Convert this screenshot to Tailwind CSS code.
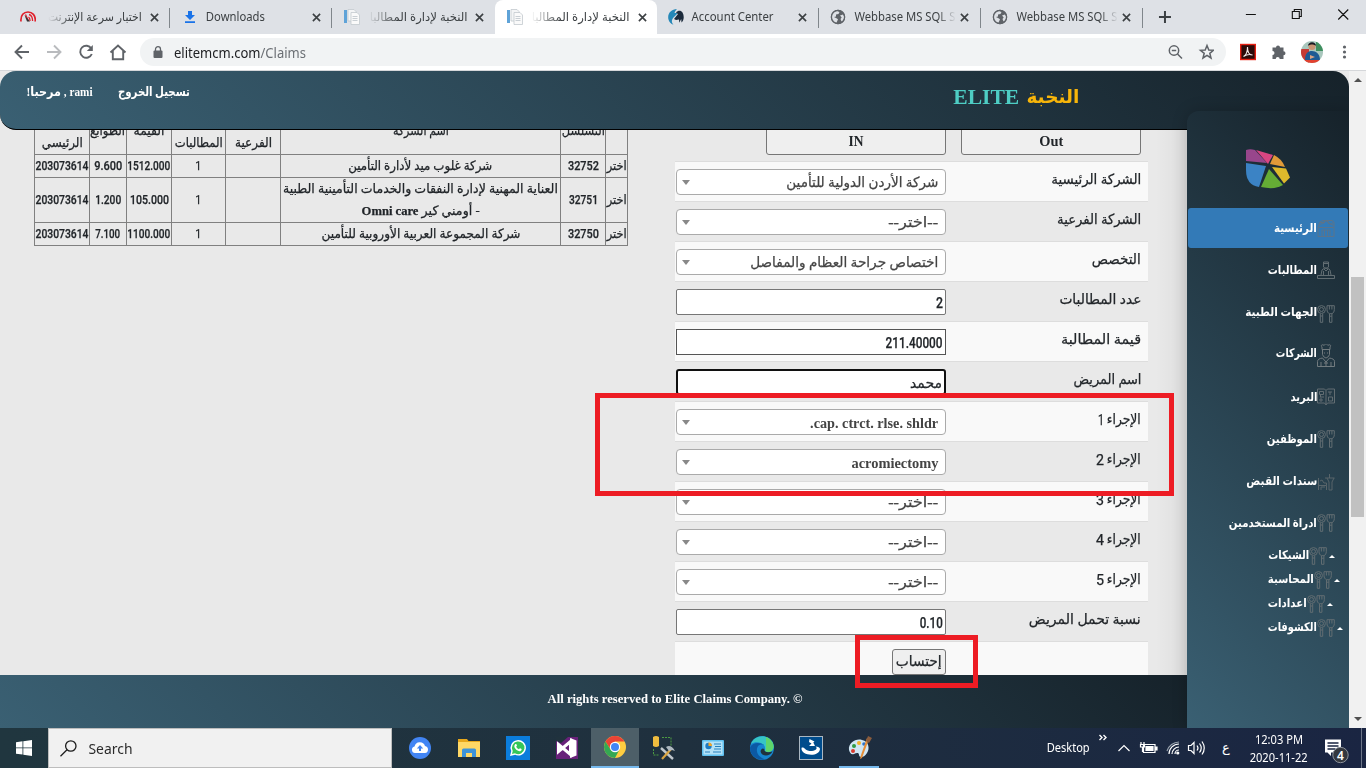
<!DOCTYPE html>
<html lang="ar">
<head>
<meta charset="utf-8">
<title>النخبة لإدارة المطالبات</title>
<script src="https://cdn.jsdelivr.net/npm/@tailwindcss/browser@4"></script>
</head>
<body class="w-[1366px] h-[768px] overflow-hidden bg-[#e9e9e9] flex flex-col relative font-['Liberation_Serif','DejaVu_Sans',serif] text-[#212529]">

<svg class="hidden">
  <symbol id="x" viewBox="0 0 10 10"><path d="M1 1l8 8M9 1l-8 8" stroke="#3c4043" stroke-width="1.8" fill="none"/></symbol>
  <symbol id="doc" viewBox="0 0 16 16"><path d="M0 1h3v13H0z" fill="#5fa3d8"/><path d="M4 .5h6l2 2V12H4z" fill="#f4f5f6" stroke="#c3c9ce" stroke-width=".8"/><path d="M7 3.500h6l2.500 2.500V15.500H7z" fill="#fafafa" stroke="#c3c9ce" stroke-width=".8"/><path d="M8.500 7.500h5M8.500 9.500h5M8.500 11.500h5" stroke="#bcc4ca" stroke-width=".8"/></symbol>
  <symbol id="globe" viewBox="0 0 16 16"><circle cx="8" cy="8" r="7.200" fill="#5f6368"/><path d="M1.500 8.500C1.500 5 4 2.500 7 2l2.500 1-1 2-2.500.5v2l-2 .5 2.500 1.200 1.500 1-1.500 3.600C3.500 13.500 1.500 11 1.500 8.500zM10 6.500l3-1 1.500 2.500-1 3.500-2 1-1-2.500 1.200-1.500z" fill="#dee1e6"/><circle cx="8" cy="8" r="6.600" fill="none" stroke="#5f6368" stroke-width="1.300"/></symbol>
  <symbol id="fork" viewBox="0 0 18 18"><g fill="none" stroke="#626d72" stroke-width="1"><circle cx="4.500" cy="4.500" r="3.900"/><circle cx="4.500" cy="4.500" r="2"/><path d="M3.300 8.500v8.800h2.400V8.500M3.300 11h2.400M10 .7h7.300v4c0 2-1 3.300-2.300 4h-2.600C11 8 10 6.700 10 4.700zM12.400.7v3.800M14.900.7v3.800M12.500 8.700v8.600h2.400V8.700M12.500 11.200h2.400"/></g></symbol>
</svg>

<!-- Tab strip -->
<div class="h-[34px] shrink-0 bg-[#dee1e6] flex pl-2 font-['Noto_Sans','DejaVu_Sans',sans-serif] text-[12px] text-[#3c4043] whitespace-nowrap">
  <div class="w-[162.400px] flex items-center relative">
    <svg class="w-4 h-4 ml-3 shrink-0" viewBox="0 0 16 16" fill="none"><path d="M1 12.500C.3 6 4 3 8 3s8 3 7.200 9.500" stroke="#e0202c" stroke-width="1.700"/><path d="M8.500 12L5.500 5.500M9 5.500c2 .5 3.500 3 3.600 6.500M8.500 8c1 .5 1.500 2 1.600 4" stroke="#e0202c" stroke-width="1.300"/><path d="M7 12.500L4.500 6 10 12.500z" fill="#333"/></svg>
    <div class="w-[94px] ml-3 text-right [mask-image:linear-gradient(to_left,black_75%,transparent)]" dir="rtl"><span data-w="94">اختبار سرعة الإنترنت</span></div>
    <svg class="w-[9px] h-[9px] ml-2"><use href="#x"/></svg>
    <i class="absolute right-0 top-2 h-5 w-px bg-[#80868b]"></i>
  </div>
  <div class="w-[162.400px] flex items-center relative">
    <svg class="w-3 h-3 ml-3.5 shrink-0" viewBox="0 0 12 12" fill="#1a73e8"><path d="M4 0h4v4h3L6 9 1 4h3zM1 10.200h10V12H1z"/></svg>
    <div class="w-[104px] ml-2.5"><span data-w="59">Downloads</span></div>
    <svg class="w-[9px] h-[9px] ml-0.5"><use href="#x"/></svg>
    <i class="absolute right-0 top-2 h-5 w-px bg-[#80868b]"></i>
  </div>
  <div class="w-[162.400px] flex items-center">
    <svg class="w-4 h-4 ml-3 shrink-0"><use href="#doc"/></svg>
    <div class="w-[99px] ml-2 text-right [mask-image:linear-gradient(to_left,black_70%,transparent)]" dir="rtl"><span data-w="98">النخبة لإدارة المطالبا</span></div>
    <svg class="w-[9px] h-[9px] ml-2"><use href="#x"/></svg>
  </div>
  <div class="w-[162.400px] flex items-center bg-white rounded-t-lg">
    <svg class="w-4 h-4 ml-3 shrink-0"><use href="#doc"/></svg>
    <div class="w-[99px] ml-2 text-right [mask-image:linear-gradient(to_left,black_70%,transparent)]" dir="rtl"><span data-w="98">النخبة لإدارة المطالبا</span></div>
    <svg class="w-[9px] h-[9px] ml-2"><use href="#x"/></svg>
  </div>
  <div class="w-[162.400px] flex items-center relative">
    <svg class="w-4 h-4 ml-[11px] shrink-0" viewBox="0 0 16 16"><path d="M9 0C3 0-1 5 .5 10.500 1 13 3 15 5.500 15.800 3.500 13.500 3 11 6 8l4-4H6.500C7 2 8 1 9 0z" fill="#2588b8"/><path d="M8 3.500C10 1 13 1 14.500 3.500c2 3.500 1.500 8-1 10l-.3-3.500-2 3.800-.2-3.300L8 11l-2-1 4-5z" fill="#1c2b3c"/></svg>
    <div class="w-[100px] ml-2"><span data-w="82">Account Center</span></div>
    <svg class="w-[9px] h-[9px] ml-[6px]"><use href="#x"/></svg>
    <i class="absolute right-0 top-2 h-5 w-px bg-[#80868b]"></i>
  </div>
  <div class="w-[162.400px] flex items-center relative">
    <svg class="w-4 h-4 ml-[11px] shrink-0"><use href="#globe"/></svg>
    <div class="w-[102px] ml-2 [mask-image:linear-gradient(to_right,black_82%,transparent)]"><span data-w="101">Webbase MS SQL S</span></div>
    <svg class="w-[9px] h-[9px] ml-[4px]"><use href="#x"/></svg>
    <i class="absolute right-0 top-2 h-5 w-px bg-[#80868b]"></i>
  </div>
  <div class="w-[162.400px] flex items-center relative">
    <svg class="w-4 h-4 ml-[11px] shrink-0"><use href="#globe"/></svg>
    <div class="w-[102px] ml-2 [mask-image:linear-gradient(to_right,black_82%,transparent)]"><span data-w="101">Webbase MS SQL S</span></div>
    <svg class="w-[9px] h-[9px] ml-[4px]"><use href="#x"/></svg>
    <i class="absolute right-0 top-2 h-5 w-px bg-[#80868b]"></i>
  </div>
  <svg class="w-[223px] h-[34px]" viewBox="0 0 223 34" fill="none"><path d="M16 17h12M22 11v12" stroke="#3c4043" stroke-width="2"/><path d="M103 14.500h10M149.500 11.500h7v7h-7zM151.500 11v-1.500h7v7h-1.500M195.500 9.500l10 10M205.500 9.500l-10 10" stroke="#111" stroke-width="1.100"/></svg>
</div>

<!-- Toolbar -->
<div class="h-[37px] shrink-0 bg-white border-b border-[#d5d7da] flex items-center font-['Noto_Sans',sans-serif]">
  <svg class="w-[140px] h-9 shrink-0" viewBox="0 0 140 36" fill="none" stroke-width="1.900"><path d="M29 18H16M22 11.500L15.500 18l6.500 6.500" stroke="#5f6368"/><path d="M47 18h13M54 11.500l6.500 6.500-6.500 6.500" stroke="#b9bbbe"/><path d="M91.300 14.500a6 6 0 1 0 .5 5.500" stroke="#5f6368"/><path d="M92.800 11v6h-6z" fill="#5f6368"/><path d="M110.500 18.500l7.500-7 7.500 7M112.800 17v8.200h10.400V17" stroke="#5f6368"/></svg>
  <div class="h-7 w-[1086px] rounded-full bg-[#f1f3f4] flex items-center">
    <svg class="w-[10px] h-3 ml-[13px]" viewBox="0 0 10 12"><rect x="0.500" y="4.500" width="9" height="7.500" rx="1" fill="#5f6368"/><path d="M2.500 5V3.200a2.500 2.500 0 0 1 5 0V5" fill="none" stroke="#5f6368" stroke-width="1.300"/></svg>
    <div class="ml-[11px] text-[14px] text-[#202124] w-[980px]"><span data-w="132">elitemcm.com<span class="text-[#6b6f74]">/Claims</span></span></div>
    <svg class="w-[60px] h-7" viewBox="0 0 60 28" fill="none" stroke="#5f6368" stroke-width="1.500"><circle cx="20" cy="12.500" r="4.700"/><path d="M23.500 16l4.500 4.500M17.800 12.500h4.400"/><path d="M53 7.500l1.800 4.500 4.700.300-3.700 3 1.200 4.700-4-2.600-4 2.600 1.200-4.700-3.700-3 4.700-.300z"/></svg>
  </div>
  <svg class="w-[140px] h-9" viewBox="0 0 140 36"><rect x="14.700" y="10.500" width="14.600" height="15" fill="#2b0b0a" stroke="#e51f12" stroke-width="1.400"/><path d="M17.500 22.500c2-1 4-4.500 4-9.500 0 5 2 8 5 8-3-1-6-.5-9 1.500z" fill="none" stroke="#f3e9e8" stroke-width="1.100"/><path d="M46.500 13.500h3.500a2 2 0 1 1 4 0h3.500v3.700a2 2 0 1 1 0 4v3.800h-3.800a2 2 0 0 0-4 0h-3.200v-4a2 2 0 1 0 0-4z" fill="#5f6368"/><clipPath id="av"><circle cx="86" cy="18" r="11"/></clipPath><g clip-path="url(#av)"><path d="M75 7h22v22H75z" fill="#a9c7bd"/><path d="M90 8h7v9h-7z" fill="#3f8f5f"/><path d="M75 15h8v14h-8z" fill="#c53a35"/><path d="M79 26c0-7 3-9 7-9s8 3 8 9z" fill="#1e5a94"/><circle cx="86" cy="12.500" r="3.500" fill="#c99473"/><path d="M82 12c0-5 8-5 8 0-2-2-6-2-8 0z" fill="#1a1a22"/><path d="M78 26h18v4H78z" fill="#e2412f"/><path d="M84 21l5 2-5 2z" fill="#d9a283"/></g><g fill="#5f6368"><circle cx="118.500" cy="13" r="1.600"/><circle cx="118.500" cy="18" r="1.600"/><circle cx="118.500" cy="23" r="1.600"/></g></svg>
</div>

<!-- Page viewport -->
<div class="h-[657px] shrink-0 flex relative">
  <div class="w-[1349px] flex flex-col relative overflow-hidden" dir="ltr">
    <header class="h-[59px] shrink-0 relative z-10 rounded-2xl border-b border-black bg-[linear-gradient(45deg,#3a6073,#16222a)] flex font-bold text-white text-[13px]">
      <div class="pl-[26px] pt-3 w-[92px] box-content leading-[18px]"><span data-w="66" dir="rtl"><bdi>rami</bdi> , مرحبا!</span></div>
      <div class="pt-3 leading-[18px]"><span data-w="72" dir="rtl">تسجيل الخروج</span></div>
      <div class="ml-[763px] pt-[11px] text-[22px] leading-[30px] flex gap-[7px]"><span data-w="66" class="text-[#4ecdc4]">ELITE</span><span data-w="53" class="text-[#f7b50a] text-[19px]">النخبة</span></div>
    </header>

    <main class="h-[545px] shrink-0 flex overflow-hidden w-[1187px]">
      <!-- Claims table -->
      <div class="ml-[34px] w-[594px] -mt-[21px] [-webkit-text-stroke:0.250px]" dir="rtl">
        <table class="table-fixed w-[593px] border-collapse text-center text-[13px] leading-[18px] [&_td]:border [&_td]:border-[#808080] [&_td]:p-0">
          <colgroup><col class="w-[22px]"><col class="w-[45px]"><col class="w-[280px]"><col class="w-[55px]"><col class="w-[54px]"><col class="w-[45px]"><col class="w-[37px]"><col class="w-[55px]"></colgroup>
          <tr class="h-[45px]"><td></td><td class="align-top pt-3!"><span data-w="43">التسلسل</span></td><td class="align-top pt-3!"><span data-w="56">اسم الشركة</span></td><td class="align-bottom pb-0.5!"><span data-w="37">الفرعية</span></td><td class="align-bottom pb-0.5!"><span data-w="48">المطالبات</span></td><td class="align-top pt-3!"><span data-w="31">القيمة</span></td><td class="align-top pt-3!"><span data-w="35">الطوابع</span></td><td class="align-bottom pb-0.5!"><span data-w="41">الرئيسي</span></td></tr>
          <tr class="h-[23px]"><td><span data-w="20">اختر</span></td><td><b class="font-['Roboto'] font-medium" data-w="31">32752</b></td><td><span data-w="144">شركة غلوب ميد لأدارة التأمين</span></td><td></td><td><b class="font-['Roboto'] font-normal" data-w="6">1</b></td><td><b class="font-['Roboto'] font-medium" data-w="43">1512.000</b></td><td><b class="font-['Roboto'] font-medium" data-w="28">9.600</b></td><td><b class="font-['Roboto'] font-medium" data-w="53">203073614</b></td></tr>
          <tr class="h-[45px]"><td><span data-w="20">اختر</span></td><td><b class="font-['Roboto'] font-medium" data-w="29">32751</b></td><td class="leading-[22px]"><span data-w="275">العناية المهنية لإدارة النفقات والخدمات التأمينية الطبية</span><br><span data-w="118">- أومني كير <b>Omni care</b></span></td><td></td><td><b class="font-['Roboto'] font-normal" data-w="6">1</b></td><td><b class="font-['Roboto'] font-medium" data-w="39">105.000</b></td><td><b class="font-['Roboto'] font-medium" data-w="26">1.200</b></td><td><b class="font-['Roboto'] font-medium" data-w="53">203073614</b></td></tr>
          <tr class="h-[23px]"><td><span data-w="20">اختر</span></td><td><b class="font-['Roboto'] font-medium" data-w="31">32750</b></td><td><span data-w="199">شركة المجموعة العربية الأوروبية للتأمين</span></td><td></td><td><b class="font-['Roboto'] font-normal" data-w="6">1</b></td><td><b class="font-['Roboto'] font-medium" data-w="43">1100.000</b></td><td><b class="font-['Roboto'] font-medium" data-w="25">7.100</b></td><td><b class="font-['Roboto'] font-medium" data-w="53">203073614</b></td></tr>
        </table>
      </div>

      <!-- Claim form -->
      <div class="ml-[47px] w-[473px] text-[14px]" dir="rtl">
        <div class="h-[31px] flex pr-[7px] gap-[15px] font-bold text-center text-[14px] leading-[24px]">
          <div class="w-[180px] h-[30px] -mt-[5px] pt-1 border border-[#767676] rounded-[3px] bg-[#efefef] box-border"><span data-w="24">Out</span></div>
          <div class="w-[180px] h-[30px] -mt-[5px] pt-1 border border-[#767676] rounded-[3px] bg-[#efefef] box-border"><span data-w="15">IN</span></div>
        </div>
        <div class="[-webkit-text-stroke:0.250px] [&>div]:h-10 [&>div]:flex [&>div]:items-start [&>div]:pt-[7px] [&>div]:pr-[7px] [&>div]:border-t [&>div]:border-[#ddd] [&>div:nth-child(odd)]:bg-[#f9f9f9] [&_label]:w-[195px] [&_label]:leading-[22px] [&_p]:w-[270px] [&_p]:h-[26px] [&_p]:border [&_p]:bg-white [&_p]:leading-[26px]">
          <div><label><span data-w="90">الشركة الرئيسية</span></label><p class="border-[#aaa] rounded text-[#444] pr-[7px] flex justify-between items-center"><span class="pt-0.5" data-w="152">شركة الأردن الدولية للتأمين</span><i class="border-x-4 border-x-transparent border-t-[5px] border-t-[#888] ml-[5px]"></i></p></div>
          <div><label><span data-w="84">الشركة الفرعية</span></label><p class="border-[#aaa] rounded text-[#444] pr-[7px] flex justify-between items-center"><span class="pt-0.5" data-w="50">--اختر--</span><i class="border-x-4 border-x-transparent border-t-[5px] border-t-[#888] ml-[5px]"></i></p></div>
          <div><label><span data-w="49">التخصص</span></label><p class="border-[#aaa] rounded text-[#444] pr-[7px] flex justify-between items-center"><span class="pt-0.5" data-w="188">اختصاص جراحة العظام والمفاصل</span><i class="border-x-4 border-x-transparent border-t-[5px] border-t-[#888] ml-[5px]"></i></p></div>
          <div><label><span data-w="82">عدد المطالبات</span></label><p class="border-[#767676] rounded-[2px] pr-0.5 font-['Roboto'] font-medium"><span data-w="7">2</span></p></div>
          <div><label><span data-w="80">قيمة المطالبة</span></label><p class="border-[#555] pr-0.5 font-['Roboto'] font-medium"><span data-w="57">211.40000</span></p></div>
          <div><label><span data-w="68">اسم المريض</span></label><p class="border-2! border-[#101010] rounded-[3px] pr-0.5"><span data-w="32">محمد</span></p></div>
          <div><label class="flex gap-[3px]"><span data-w="34">الإجراء</span><b class="font-['Roboto'] font-normal" data-w="6">1</b></label><p class="border-[#aaa] rounded text-[#444] pr-[7px] flex justify-between items-center font-bold [-webkit-text-stroke:0px]"><span class="pt-1" data-w="128">cap. ctrct. rlse. shldr.</span><i class="border-x-4 border-x-transparent border-t-[5px] border-t-[#888] ml-[5px]"></i></p></div>
          <div><label class="flex gap-[3px]"><span data-w="34">الإجراء</span><b class="font-['Roboto'] font-normal" data-w="8">2</b></label><p class="border-[#aaa] rounded text-[#444] pr-[7px] flex justify-between items-center font-bold [-webkit-text-stroke:0px]"><span class="pt-1" data-w="87">acromiectomy</span><i class="border-x-4 border-x-transparent border-t-[5px] border-t-[#888] ml-[5px]"></i></p></div>
          <div><label class="flex gap-[3px]"><span data-w="34">الإجراء</span><b class="font-['Roboto'] font-normal" data-w="8">3</b></label><p class="border-[#aaa] rounded text-[#444] pr-[7px] flex justify-between items-center"><span class="pt-0.5" data-w="50">--اختر--</span><i class="border-x-4 border-x-transparent border-t-[5px] border-t-[#888] ml-[5px]"></i></p></div>
          <div><label class="flex gap-[3px]"><span data-w="34">الإجراء</span><b class="font-['Roboto'] font-normal" data-w="8">4</b></label><p class="border-[#aaa] rounded text-[#444] pr-[7px] flex justify-between items-center"><span class="pt-0.5" data-w="50">--اختر--</span><i class="border-x-4 border-x-transparent border-t-[5px] border-t-[#888] ml-[5px]"></i></p></div>
          <div><label class="flex gap-[3px]"><span data-w="34">الإجراء</span><b class="font-['Roboto'] font-normal" data-w="8">5</b></label><p class="border-[#aaa] rounded text-[#444] pr-[7px] flex justify-between items-center"><span class="pt-0.5" data-w="50">--اختر--</span><i class="border-x-4 border-x-transparent border-t-[5px] border-t-[#888] ml-[5px]"></i></p></div>
          <div><label><span data-w="112">نسبة تحمل المريض</span></label><p class="border-[#767676] rounded-[2px] pr-0.5 font-['Roboto'] font-medium"><span data-w="23">0.10</span></p></div>
          <div><label></label><button class="w-[54px] h-[26px] border border-[#767676] rounded-[3px] bg-[#efefef] text-center leading-[24px]"><span data-w="46">إحتساب</span></button></div>
        </div>
      </div>
      <div class="flex-1 bg-linear-to-r from-transparent from-20% to-black/5"></div>
    </main>

    <footer class="h-[53px] shrink-0 bg-[linear-gradient(45deg,#3a6073,#16222a)] w-[1187px] text-white font-bold text-[13px] pl-[548px] pt-[14px] leading-5"><span data-w="255">All rights reserved to Elite Claims Company. ©</span></footer>

    <!-- Side navigation, fixed above header and footer -->
    <nav class="absolute z-20 left-[1187px] top-10 w-[162px] h-[617px] rounded-tl-xl bg-[linear-gradient(45deg,#3a6073,#16222a)] shadow-[0_0_16px_rgba(0,0,0,0.2)] text-white font-bold text-[12px] flex flex-col">
      <div class="h-[97px] shrink-0 pt-[37px] pl-[57px]">
        <svg class="w-[46px] h-[41px]" viewBox="0 0 46 41"><path d="M2 2Q6 .5 11 2L23 15 2 13z" fill="#98468c"/><path d="M12 2l17 5-5 9z" fill="#d94682"/><path d="M30 7q8 4 11 12l-15-3z" fill="#e19a38"/><path d="M28 19l14 1.500 4 9-6 6z" fill="#deb92c"/><path d="M25 21l14 16q-8 5-22 2z" fill="#65ac35"/><path d="M2 15l20 3-7 21Q2 37 2 22z" fill="#3b83c5"/></svg>
      </div>
      <div class="h-10 mx-px rounded-[3px] bg-[#337ab7] flex items-center justify-end pr-[13px]"><span data-w="43">الرئيسية</span><svg class="w-[18px] h-[18px]" viewBox="0 0 18 18" fill="none" stroke="#5b748b"><path d="M1 17.500V8.500h16v9zM1 8L3 3 6 1.500h9L17 3v5M6 5a3 3 0 0 1 6 0M2 6l4-2M12 4.500l5 2M5 17v-6h8v6M7.500 11v6M10.500 11v6M3 3.500h5M10 2.500c2 3 4 3 6 1"/></svg></div>
      <div class="h-11 flex items-center justify-end pr-[14px]"><span data-w="49">المطالبات</span><svg class="w-[18px] h-[18px]" viewBox="0 0 18 18" fill="none" stroke="#626d72"><path d="M.5 14.500h17v3H.5zM6.500 1h5v5c-1.500 2-3.500 2-5 0zM6 2.500h6M4 14l1-5 2.500-2h3L13 9l1 5M6.500 10v4M11.500 10v4M7 8l2 2 2-2"/></svg></div>
      <div class="h-[39px] flex items-center justify-end pr-[14px]"><span data-w="72">الجهات الطبية</span><svg class="w-[18px] h-[18px] mt-1"><use href="#fork"/></svg></div>
      <div class="h-11 flex items-center justify-end pr-[14px]"><span data-w="41">الشركات</span><svg class="w-[18px] h-[23px] mt-1" viewBox="0 0 18 23" fill="none" stroke="#727b7f"><path d="M5 5.500V3C3 1 6 0 7 1.500 8-.5 10-.5 11 1.500c1-1.500 4-.5 2 1.500v2.500zM5.500 5.500v5c2 4.500 5 4.500 7 0v-5M7 9h1M10 9h1M.5 22.500v-5c0-2 2-3 5-3.500L9 18l3.500-4c3 .5 5 1.500 5 3.500v5zM4 22v-4M14 22v-4M7 19h4M9 18v4"/></svg></div>
      <div class="h-11 flex items-center justify-end pr-[14px]"><span data-w="27">البريد</span><svg class="w-[18px] h-[18px]" viewBox="0 0 18 18" fill="none" stroke="#626d72"><path d="M.5 1h7L9 2.500 10.500 1h7v14h-7L9 17l-1.500-2h-7zM9 2.500V16M2.500 3.500h4v3h-4zM3 9h4M3 11h2v2H3zM11 4h4M13 4v3M11.500 9h4v4h-4zM3.500 7v2"/></svg></div>
      <div class="h-10 flex items-center justify-end pr-[14px]"><span data-w="50">الموظفين</span><svg class="w-[18px] h-[18px]"><use href="#fork"/></svg></div>
      <div class="h-11 flex items-center justify-end pr-[14px]"><span data-w="71">سندات القبض</span><svg class="w-[18px] h-[18px] mt-0.5" viewBox="0 0 18 18" fill="none" stroke="#59656a"><path d="M1.500 5v12M1.500 12.500h8v4.500M3 8l2-1 2 3h2.500v2.500M8 5h9.500M12.500 1v4M10 5l2 4v8h3V9l2-4M4 17v-3h4"/></svg></div>
      <div class="h-10 flex items-center justify-end pr-[14px]"><span data-w="88">ادراة المستخدمين</span><svg class="w-[18px] h-[18px]"><use href="#fork"/></svg></div>
      <div class="h-6 flex items-center pl-[81px]"><span data-w="41">الشيكات</span><svg class="w-[18px] h-[18px] mt-0.5"><use href="#fork"/></svg><i class="ml-0.5 mt-0.5 border-x-[3px] border-x-transparent border-b-[3px] border-b-white"></i></div>
      <div class="h-6 flex items-center pl-[81px]"><span data-w="46">المحاسبة</span><svg class="w-[18px] h-[18px] mt-0.5"><use href="#fork"/></svg><i class="ml-0.5 mt-0.5 border-x-[3px] border-x-transparent border-b-[3px] border-b-white"></i></div>
      <div class="h-6 flex items-center pl-[81px]"><span data-w="39">اعدادات</span><svg class="w-[18px] h-[18px] mt-0.5"><use href="#fork"/></svg><i class="ml-0.5 mt-0.5 border-x-[3px] border-x-transparent border-b-[3px] border-b-white"></i></div>
      <div class="h-6 flex items-center pl-[81px]"><span data-w="49">الكشوفات</span><svg class="w-[18px] h-[18px] mt-0.5"><use href="#fork"/></svg><i class="ml-0.5 mt-0.5 border-x-[3px] border-x-transparent border-b-[3px] border-b-white"></i></div>
    </nav>
  </div>
  <!-- Scrollbar -->
  <div class="w-[17px] bg-[#f1f1f1] flex flex-col items-center">
    <i class="mt-[7px] border-x-4 border-x-transparent border-b-4 border-b-[#505050]"></i>
    <i class="mt-[195px] w-[13px] h-[240px] bg-[#c1c1c1]"></i>
    <i class="mt-[200px] border-x-4 border-x-transparent border-t-4 border-t-[#505050]"></i>
  </div>
</div>

<!-- Taskbar -->
<div class="h-10 shrink-0 bg-linear-to-r from-[#20363f] via-[#1f303e] to-[#1a2542] flex items-center font-['Noto_Sans','DejaVu_Sans',sans-serif] text-white text-[12px]">
  <svg class="w-4 h-4 ml-4 mr-4 shrink-0" viewBox="0 0 16 16" fill="#fff"><path d="M0 2.200L6.500 1.300V7.500H0zM7.300 1.200L16 0v7.500H7.300zM0 8.300h6.500v6.200L0 13.700zM7.300 8.300H16V16l-8.700-1.200z"/></svg>
  <div class="w-[344px] h-10 bg-[#f1f1f1] border border-[#bdbdbd] flex items-center shrink-0">
    <svg class="w-[17px] h-[17px] ml-[11px]" viewBox="0 0 17 17" fill="none" stroke="#1c1c1c" stroke-width="1.300"><circle cx="10.800" cy="6" r="5.200"/><path d="M7 9.800L.5 16.300"/></svg>
    <div class="ml-[11px] text-[15px] text-[#2b2b2b]"><span data-w="44">Search</span></div>
  </div>
  <div class="flex h-10 ml-[3px] [&>div]:w-[49px] [&>div]:flex [&>div]:items-center [&>div]:justify-center">
    <div><svg class="w-[22px] h-[22px]" viewBox="0 0 22 22"><circle cx="11" cy="11" r="11" fill="#4285f4"/><path d="M6 16a3.300 3.300 0 0 1-.5-6.500 5.500 5.500 0 0 1 10.500-.6A3.600 3.600 0 0 1 16 16z" fill="#fff"/><path d="M11 8l3.200 3.500H12V14h-2v-2.500H7.800z" fill="#4285f4"/></svg></div>
    <div><svg class="w-[22px] h-[20px]" viewBox="0 0 22 20"><path d="M0 1h9l1.500 2H22v16H0z" fill="#e8a81b"/><path d="M0 4h22v15H0z" fill="#ffd865"/><path d="M4 19v-7q0-1.500 1.500-1.500h11Q18 10.500 18 12v7h-4v-4H8v4z" fill="#3d93d8"/></svg></div>
    <div><svg class="w-6 h-6" viewBox="0 0 24 24"><path d="M0 0h24v24H0z" fill="#0b7ddc"/><path d="M5 19l1-4A7 7 0 1 1 9 18z" fill="#35c65a" stroke="#fff" stroke-width="1.400"/><path d="M9 8.500c1-1 1.700 0 2 1l-.8 1.200c.5 1.200 1.500 2 2.700 2.500l1-1c1 .3 2 .8 1.700 1.500-.8 2.500-4 1.500-6-.700C8 11.500 8 9.500 9 8.500z" fill="#fff"/></svg></div>
    <div><svg class="w-[22px] h-[22px]" viewBox="0 0 22 22"><path d="M0 0h22v22H0z" fill="#68217a"/><path d="M0 0h12L5 6 0 4z" fill="#20323d"/><path d="M2.500 7.500L14.500 17.500V4.500L2.500 14.500z" fill="none" stroke="#fff" stroke-width="3"/><path d="M14 1l6.500 2.500v15L14 21z" fill="#fff"/></svg></div>
    <div class="bg-[#4d5f68] border-b-2 border-[#76b9ed] w-[48px]!"><svg class="w-[22px] h-[22px]" viewBox="0 0 22 22"><circle cx="11" cy="11" r="11" fill="#ffcd40"/><path d="M1.500 5.500A11 11 0 0 1 20.500 5.500H11L6.500 13.500z" fill="#ea4335"/><path d="M1.500 5.500A11 11 0 0 0 11 22l4.500-8.500-9-.1z" fill="#34a853"/><circle cx="11" cy="11" r="5.200" fill="#fff"/><circle cx="11" cy="11" r="4" fill="#4285f4"/></svg></div>
    <div><svg class="w-6 h-6" viewBox="0 0 24 24" fill="none"><path d="M1 1q3-2 6 0v9q-3 2-6 0z" fill="#f0bd3f"/><path d="M10 1.500h9v9M1.500 13v6h6" stroke="#4c9b42" stroke-dasharray="2 1"/><path d="M9 12l12 11" stroke="#bfc6cc" stroke-width="2.400"/><path d="M20 12L10 23" stroke="#d9a441" stroke-width="2.200"/><path d="M14 11q5-3 9 4l-3-1-3 1z" fill="#aeb8c0"/></svg></div>
    <div><svg class="w-[22px] h-4" viewBox="0 0 22 16"><rect width="22" height="16" rx="1" fill="#5fc1f1"/><rect x="1.500" y="1.500" width="19" height="13" fill="#b4e2f8"/><circle cx="6.500" cy="6" r="3.200" fill="#1e7ac2"/><path d="M6.500 6V2.500A3.500 3.500 0 0 1 10 6z" fill="#f4a62a"/><path d="M12 4h7M13 6.500h6M12 9h7M3 12h5M11 12h8" stroke="#2680bd" stroke-width="1.200"/></svg></div>
    <div><svg class="w-6 h-6" viewBox="0 0 24 24"><circle cx="12" cy="12" r="12" fill="#1685d0"/><path d="M1 8C4-1 18-3 23 7c2 6-1 9-6 9-2 0-3-1-2-3 1-6-9-9-14-5z" fill="#37c5c5"/><path d="M16 1c6 2 9 9 7 12-1 3-5 3.500-7 2.500 0 0-1-.5 0-2z" fill="#5fd56a"/><path d="M8 10c-3 5 0 11 7 13.500C6 25-1 18 .2 11 3 6 10 6 14 9c-3-1-5 0-6 1z" fill="#0c59a4"/><path d="M14.500 13c-1 3 3 4 8 2.500-2 4-7 5-10 3-3-2.500-2-5 0-6z" fill="#20323d"/></svg></div>
    <div><svg class="w-6 h-6" viewBox="0 0 24 24"><rect x=".5" y=".5" width="23" height="23" fill="#004c8c" stroke="#aab7c2"/><path d="M2.500 12c-1 8 18 9.500 18.500 1 0-1.500-2-2.500-4.500-2.500 3.500 2.500-2 5-6 4.500-3-.5-3.500-1-4.500-2.200-1.500-1.500-3-1.500-3.500-.8z" fill="#fff"/><path d="M10.500 3l5 2.500-1.200 1L16 10H10l2.500-2.500L10 6z" fill="#fff"/></svg></div>
    <div class="relative"><svg class="w-6 h-6" viewBox="0 0 24 24"><path d="M1 14C0 7 8 2 14 4c7 1 8 9 5 13-4 6-8 4-8 2 0-3-3-2-5-1-3 1-4-1-5-4z" fill="#cfe6f4"/><circle cx="5" cy="15" r="2" fill="#d83b2e"/><circle cx="6" cy="10" r="2" fill="#2f9a45"/><circle cx="11" cy="7" r="2" fill="#f2b02a"/><circle cx="16" cy="8" r="1.800" fill="#2d73c9"/><path d="M21 3l-7 19-2 1 1-4 6-17z" fill="#e58d36"/><path d="M18 5l2-5 4 2-3 5z" fill="#8b5c3d"/></svg><i class="absolute left-[4px] bottom-0 w-10 h-0.5 bg-[#76b9ed]"></i></div>
  </div>
  <div class="ml-[163px] w-[44px]"><span data-w="43">Desktop</span></div>
  <svg class="w-[122px] h-10 ml-[6px] shrink-0" viewBox="1096 0 122 40" fill="none" stroke="#fff" stroke-width="1.200"><path d="M1098.500 7l2.500 2.500-2.500 2.500M1102.500 7l2.500 2.500-2.500 2.500" stroke-width="1.400"/><path d="M1117.500 23l5.500-5.500 5.500 5.500"/><path d="M1142.500 16.500h11.500v8h-11.500z"/><path d="M1145 18.500h7v4h-7zM1154.500 19h1.500v3h-1.500z" fill="#fff"/><path d="M1140 14v2M1143 14v2M1139.500 16.500h4v2.500h-4zM1141.500 19v5" /><path d="M1168 26a10 10 0 0 1 10-10M1171 26a7 7 0 0 1 7-7M1174 26a4 4 0 0 1 4-4" /><path d="M1166 23a13 13 0 0 1 12-9" stroke="#96a0ac"/><circle cx="1176.800" cy="25" r="1" fill="#fff"/><path d="M1187.500 17.500h2.500l3-3v11l-3-3h-2.500zM1196 17.500q2 2.500 0 5M1198.500 15.500q3.500 4.500 0 9M1201 13.500q4.500 6.500 0 13"/></svg>
  <div class="w-[14px] text-center text-[13px]">ع</div>
  <div class="w-[66px] ml-[13px] text-center leading-[18px] pt-0.5 shrink-0"><span data-w="48">12:03 PM</span><br><span data-w="58">2020-11-22</span></div>
  <svg class="w-[28px] h-10 ml-[13px] shrink-0" viewBox="0 0 28 40"><path d="M0 11.500h16v13H6V28l-3.500-3.500H0z" fill="#fff"/><path d="M2.500 15h11M2.500 18h11M2.500 21h8" stroke="#1a2542" stroke-width="1.300"/><circle cx="15.500" cy="27" r="7.700" fill="#34383f" stroke="#8d939c"/><text x="15.500" y="31.500" font-size="12" font-weight="600" text-anchor="middle" fill="#fff">4</text></svg>
  <i class="w-px h-10 ml-[8px] bg-[#6d7688]"></i>
</div>

<!-- Highlight boxes -->
<div class="absolute z-30 left-[595px] top-[393px] w-[579px] h-[103px] border-[5px] border-[#ed1c24]"></div>
<div class="absolute z-30 left-[855px] top-[635px] w-[123px] h-[53px] border-[5px] border-[#ed1c24]"></div>

<script>
  function fitLabels() {
    document.querySelectorAll('[data-w]').forEach(function (el) {
      var s = el.style;
      s.transform = 'none';
      s.marginLeft = '0px';
      s.display = 'inline-block';
      s.whiteSpace = 'nowrap';
      s.flexShrink = 0;
      s.width = 'max-content';
      var w = +el.dataset.w, n = el.getBoundingClientRect().width;
      s.transformOrigin = 'right';
      s.transform = 'scaleX(' + w / n + ')';
      s.marginLeft = (w - n) + 'px';
    });
  }
  fitLabels();
  window.addEventListener('load', fitLabels);
  document.fonts.ready.then(fitLabels);
  new ResizeObserver(fitLabels).observe(document.body);
  [0, 50, 150].forEach(function (t) { setTimeout(fitLabels, t); });
</script>
</body>
</html>
